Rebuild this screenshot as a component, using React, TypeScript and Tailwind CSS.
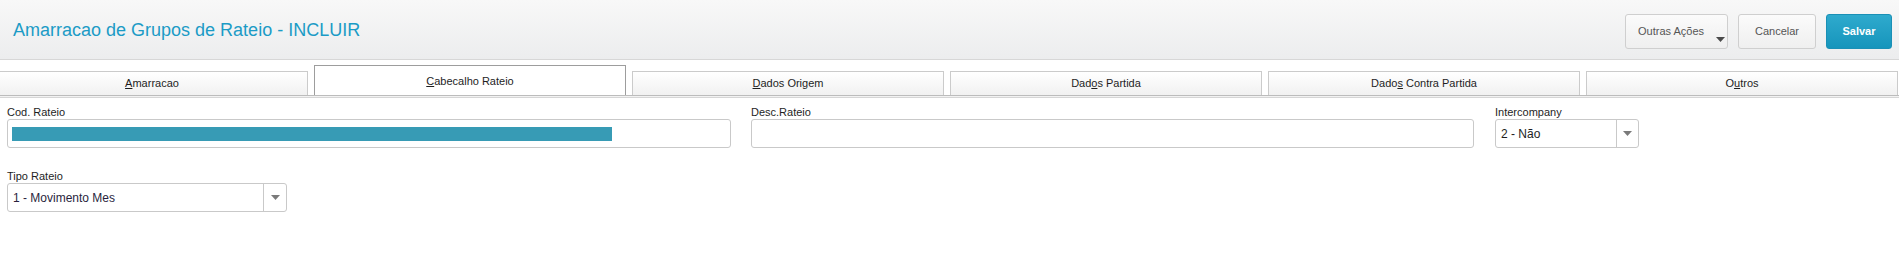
import React from "react";

function Tab({ children, active = false }: { children: React.ReactNode; active?: boolean }) {
  if (active) {
    return (
      <div className="w-[312px] shrink-0 h-[30px] border border-b-0 border-[#9d9d9d] bg-white flex justify-center pt-[9px] text-[11px] leading-[13px] text-[#1e1e1e]">
        {children}
      </div>
    );
  }
  return (
    <div className="w-[312px] shrink-0 h-[24px] border border-b-0 border-[#cbcbcb] bg-gradient-to-b from-white to-[#f1f1f1] flex items-center justify-center text-[11px] leading-[13px] text-[#1e1e1e]">
      {children}
    </div>
  );
}

function Caret() {
  return (
    <svg width="9" height="5" viewBox="0 0 9 5">
      <path d="M0 0 L9 0 L4.5 5 Z" fill="#7a7a7a" />
    </svg>
  );
}

export default function App() {
  return (
    <div className="w-[1899px] h-[255px] bg-white overflow-hidden font-['Liberation_Sans',Arial,sans-serif]">
      {/* Header */}
      <div className="h-[60px] flex justify-between border-b border-[#d7d7d7] bg-gradient-to-b from-[#f8f8f8] to-[#ecedee]">
        <div className="pl-[13px] pt-[19px] text-[18px] leading-[22px] text-[#1b9bc6]">
          Amarracao de Grupos de Rateio - INCLUIR
        </div>
        <div className="flex gap-[10px] pt-[14px] pr-[7px]">
          <div className="relative w-[103px] h-[35px] rounded-[3px] border border-[#cfcfcf] bg-gradient-to-b from-[#fbfbfb] to-[#efefef] flex items-center pl-[12px] text-[11px] text-[#555]">
            Outras Ações
            <svg className="absolute right-[2px] bottom-[6px]" width="9" height="5" viewBox="0 0 9 5">
              <path d="M0 0 L9 0 L4.5 5 Z" fill="#4a4a4a" />
            </svg>
          </div>
          <div className="w-[78px] h-[35px] rounded-[3px] border border-[#cfcfcf] bg-gradient-to-b from-[#fbfbfb] to-[#efefef] flex items-center justify-center text-[11px] text-[#555]">
            Cancelar
          </div>
          <div className="w-[66px] h-[35px] rounded-[3px] border border-[#1a90b6] bg-gradient-to-b from-[#2eaacd] to-[#1595bc] flex items-center justify-center text-[11px] font-bold text-white">
            Salvar
          </div>
        </div>
      </div>

      {/* Tabs */}
      <div className="h-[35px] flex items-end gap-[6px] -ml-[4px]">
        <Tab><span><u>A</u>marracao</span></Tab>
        <Tab active><span><u>C</u>abecalho Rateio</span></Tab>
        <Tab><span><u>D</u>ados Origem</span></Tab>
        <Tab><span>Dad<u>o</u>s Partida</span></Tab>
        <Tab><span>Dado<u>s</u> Contra Partida</span></Tab>
        <Tab><span>O<u>u</u>tros</span></Tab>
      </div>
      <div className="h-[1px] bg-[#bcbcbc]" />
      <div className="h-[1px] bg-[#f2f2f2]" />
      <div className="h-[1px] bg-[#d6d6d6]" />

      {/* Form */}
      <div className="pl-[7px] pt-[7px] text-[#1e1e1e]">
        <div className="flex">
          <div className="w-[724px]">
            <div className="text-[11px] leading-[14px]">Cod. Rateio</div>
            <div className="h-[29px] border border-[#c9c9c9] rounded-[3px] pt-[7px] pl-[4px]">
              <div className="w-[600px] h-[14px] bg-[#379bb5]" />
            </div>
          </div>
          <div className="w-[723px] ml-[20px]">
            <div className="text-[11px] leading-[14px]">Desc.Rateio</div>
            <div className="h-[29px] border border-[#c9c9c9] rounded-[3px]" />
          </div>
          <div className="w-[144px] ml-[21px]">
            <div className="text-[11px] leading-[14px]">Intercompany</div>
            <div className="h-[29px] border border-[#c9c9c9] rounded-[3px] flex">
              <div className="flex-1 flex items-center pl-[5px] text-[12px]">2 - Não</div>
              <div className="w-[22px] border-l border-[#c9c9c9] flex items-center justify-center">
                <Caret />
              </div>
            </div>
          </div>
        </div>

        <div className="mt-[21px] w-[280px]">
          <div className="text-[11px] leading-[14px]">Tipo Rateio</div>
          <div className="h-[29px] border border-[#c9c9c9] rounded-[3px] flex">
            <div className="flex-1 flex items-center pl-[5px] text-[12px] text-[#2a1f3d]">1 - Movimento Mes</div>
            <div className="w-[23px] border-l border-[#c9c9c9] flex items-center justify-center">
              <Caret />
            </div>
          </div>
        </div>
      </div>
    </div>
  );
}
